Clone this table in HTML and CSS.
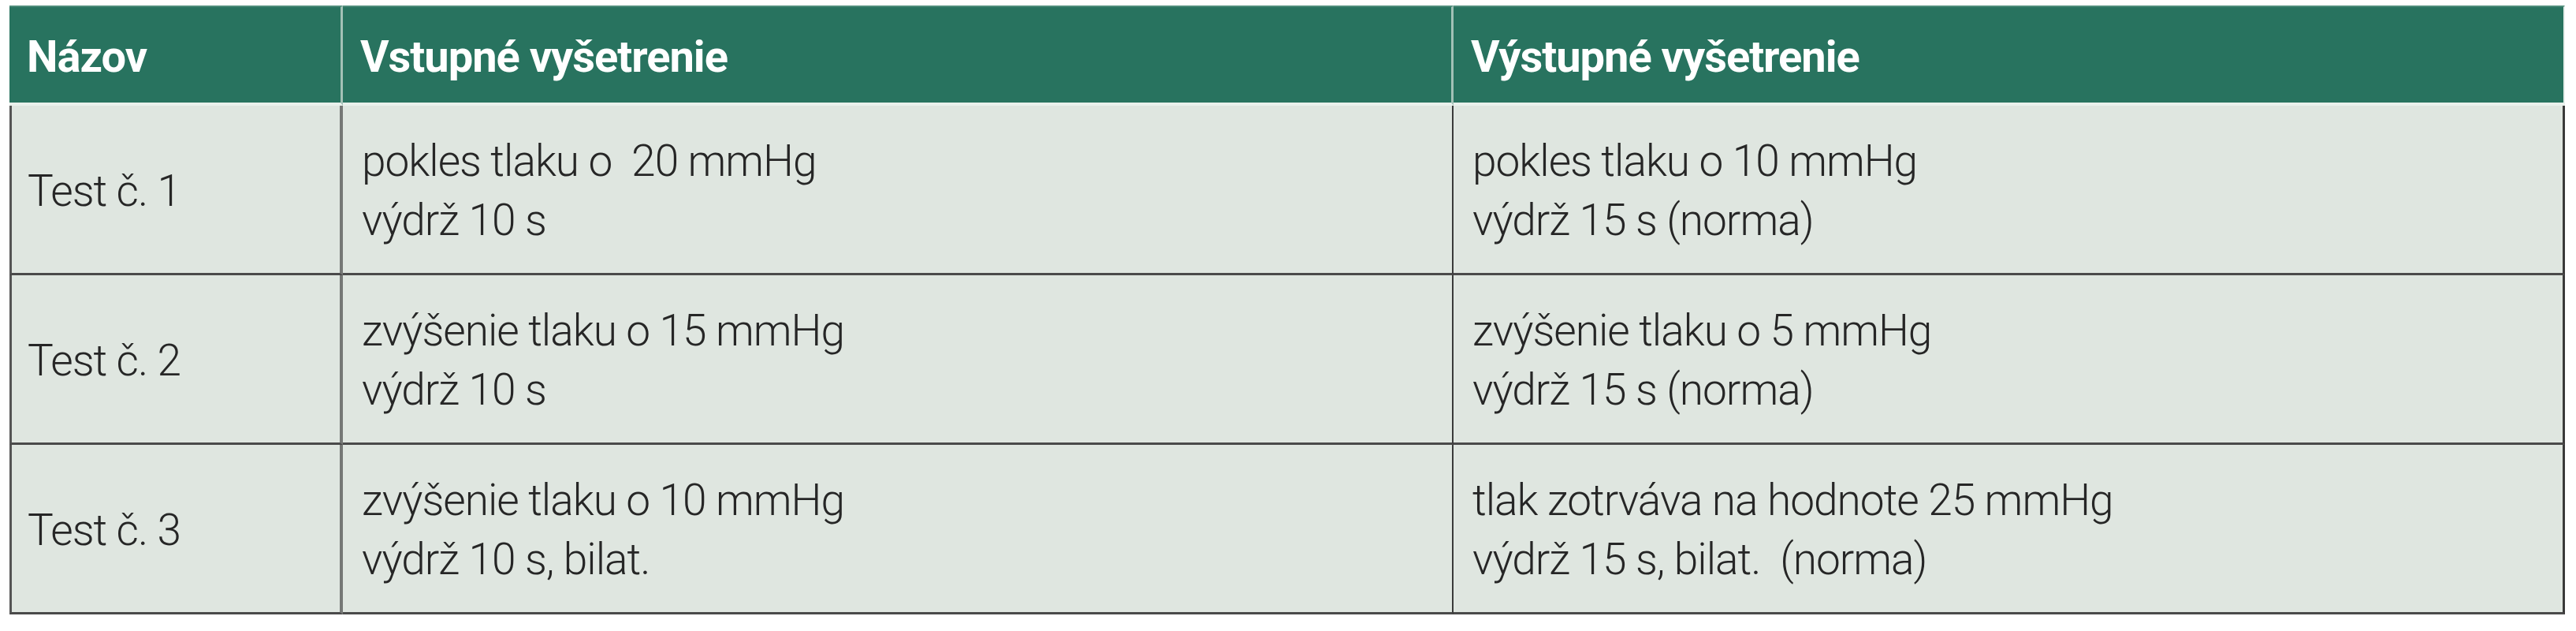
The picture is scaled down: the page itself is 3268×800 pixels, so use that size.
FILE: index.html
```html
<!DOCTYPE html>
<html lang="sk">
<head>
<meta charset="utf-8">
<title>Tabuľka testov</title>
<link rel="stylesheet" href="styles.css">
</head>
<body>
<table class="tests">
  <colgroup>
    <col class="c-name">
    <col class="c-in">
    <col class="c-out">
  </colgroup>
  <thead>
    <tr>
      <th>Názov</th>
      <th>Vstupné vyšetrenie</th>
      <th class="last">Výstupné vyšetrenie</th>
    </tr>
  </thead>
  <tbody>
    <tr>
      <td class="name">Test č. 1</td>
      <td class="mid">pokles tlaku o&nbsp; 20 mmHg<br>výdrž 10 s</td>
      <td class="last">pokles tlaku o 10 mmHg<br>výdrž 15 s (norma)</td>
    </tr>
    <tr>
      <td class="name">Test č. 2</td>
      <td class="mid">zvýšenie tlaku o 15 mmHg<br>výdrž 10 s</td>
      <td class="last">zvýšenie tlaku o 5 mmHg<br>výdrž 15 s (norma)</td>
    </tr>
    <tr>
      <td class="name">Test č. 3</td>
      <td class="mid">zvýšenie tlaku o 10 mmHg<br>výdrž 10 s, bilat.</td>
      <td class="last">tlak zotrváva na hodnote 25 mmHg<br>výdrž 15 s, bilat.&nbsp; (norma)</td>
    </tr>
  </tbody>
</table>
</body>
</html>
```
FILE: styles.css
```css
html, body {
  margin: 0;
  background: #ffffff;
}
body {
  padding: 7px 14px 0 12px;
  font-family: Roboto, "Liberation Sans", sans-serif;
}
.tests {
  width: 3242px;
  table-layout: fixed;
  border-collapse: separate;
  border-spacing: 0;
}
.c-name { width: 423px; }
.c-in { width: 1409px; }
.c-out { width: 1410px; }

.tests th {
  box-sizing: border-box;
  height: 127px;
  padding: 6px 0 0 22px;
  background: #28735f;
  color: #ffffff;
  font-weight: 700;
  font-size: 56px;
  letter-spacing: -1px;
  line-height: 75px;
  text-align: left;
  vertical-align: middle;
  border-top: 2px solid #4d8b79;
  border-right: 3px solid #a3c1b6;
  border-bottom: 4px solid #eaf1ec;
}
.tests th.last {
  border-right: 2px solid #e6eeea;
}

.tests td {
  box-sizing: border-box;
  height: 215px;
  padding: 4px 0 0 24px;
  background: #dfe6e0;
  color: #262626;
  font-weight: 300;
  font-size: 55px;
  letter-spacing: -1px;
  line-height: 75px;
  vertical-align: middle;
  border-bottom: 3px solid #4a4a4a;
}
.tests td.name {
  border-left: 3px solid #555555;
  border-right: 4px solid #767876;
  padding-left: 20px;
}
.tests td.mid {
  border-right: 2px solid #3a3a3a;
}
.tests td.last {
  border-right: 3px solid #3a3a3a;
}
```
